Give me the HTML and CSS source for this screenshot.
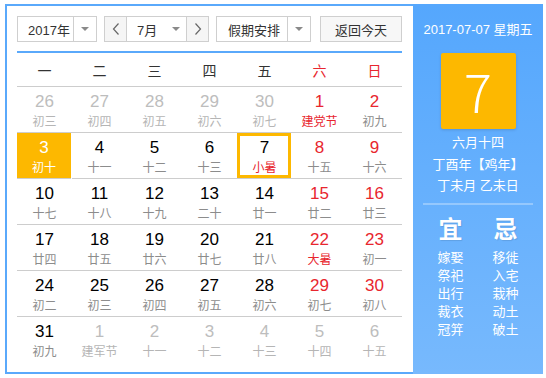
FILE: index.html
```html
<!DOCTYPE html>
<html lang="zh">
<head>
<meta charset="utf-8">
<link rel="stylesheet" href="styles.css">
</head>
<body>
<div class="cal">
  <div class="main">
    <div class="toolbar">
      <div class="sel sel-year"><span class="sel-text">2017年</span><span class="sel-arrow"><i class="tri"></i></span></div>
      <div class="month-group">
        <span class="nav"><svg width="8" height="12" viewBox="0 0 8 12"><polyline points="6.5,0.5 1.5,6 6.5,11.5" fill="none" stroke="#666" stroke-width="1.2"/></svg></span>
        <span class="sel-text month-text">7月</span><span class="sel-arrow month-arrow"><i class="tri"></i></span>
        <span class="nav nav-next"><svg width="8" height="12" viewBox="0 0 8 12"><polyline points="1.5,0.5 6.5,6 1.5,11.5" fill="none" stroke="#666" stroke-width="1.2"/></svg></span>
      </div>
      <div class="sel sel-holiday"><span class="sel-text">假期安排</span><span class="sel-arrow"><i class="tri"></i></span></div>
      <div class="btn-today">返回今天</div>
    </div>
    <div class="grid">
      <div class="wk">一</div><div class="wk">二</div><div class="wk">三</div><div class="wk">四</div><div class="wk">五</div><div class="wk red">六</div><div class="wk red">日</div>

      <div class="day other"><b>26</b><span>初三</span></div>
      <div class="day other"><b>27</b><span>初四</span></div>
      <div class="day other"><b>28</b><span>初五</span></div>
      <div class="day other"><b>29</b><span>初六</span></div>
      <div class="day other"><b>30</b><span>初七</span></div>
      <div class="day we fest"><b>1</b><span>建党节</span></div>
      <div class="day we"><b>2</b><span>初九</span></div>

      <div class="day sel-day"><b>3</b><span>初十</span></div>
      <div class="day"><b>4</b><span>十一</span></div>
      <div class="day"><b>5</b><span>十二</span></div>
      <div class="day"><b>6</b><span>十三</span></div>
      <div class="day today fest"><b>7</b><span>小暑</span></div>
      <div class="day we"><b>8</b><span>十五</span></div>
      <div class="day we"><b>9</b><span>十六</span></div>

      <div class="day"><b>10</b><span>十七</span></div>
      <div class="day"><b>11</b><span>十八</span></div>
      <div class="day"><b>12</b><span>十九</span></div>
      <div class="day"><b>13</b><span>二十</span></div>
      <div class="day"><b>14</b><span>廿一</span></div>
      <div class="day we"><b>15</b><span>廿二</span></div>
      <div class="day we"><b>16</b><span>廿三</span></div>

      <div class="day"><b>17</b><span>廿四</span></div>
      <div class="day"><b>18</b><span>廿五</span></div>
      <div class="day"><b>19</b><span>廿六</span></div>
      <div class="day"><b>20</b><span>廿七</span></div>
      <div class="day"><b>21</b><span>廿八</span></div>
      <div class="day we fest"><b>22</b><span>大暑</span></div>
      <div class="day we"><b>23</b><span>初一</span></div>

      <div class="day"><b>24</b><span>初二</span></div>
      <div class="day"><b>25</b><span>初三</span></div>
      <div class="day"><b>26</b><span>初四</span></div>
      <div class="day"><b>27</b><span>初五</span></div>
      <div class="day"><b>28</b><span>初六</span></div>
      <div class="day we"><b>29</b><span>初七</span></div>
      <div class="day we"><b>30</b><span>初八</span></div>

      <div class="day last"><b>31</b><span>初九</span></div>
      <div class="day last other"><b>1</b><span>建军节</span></div>
      <div class="day last other"><b>2</b><span>十一</span></div>
      <div class="day last other"><b>3</b><span>十二</span></div>
      <div class="day last other"><b>4</b><span>十三</span></div>
      <div class="day last other"><b>5</b><span>十四</span></div>
      <div class="day last other"><b>6</b><span>十五</span></div>
    </div>
  </div>
  <div class="side">
    <div class="side-date">2017-07-07 星期五</div>
    <div class="big-day">7</div>
    <div class="lunar">
      <div>六月十四</div>
      <div>丁酉年【鸡年】</div>
      <div>丁未月 乙未日</div>
    </div>
    <div class="sep"></div>
    <div class="yiji">
      <div class="col">
        <div class="yj-title">宜</div>
        <div>嫁娶</div><div>祭祀</div><div>出行</div><div>裁衣</div><div>冠笄</div>
      </div>
      <div class="col">
        <div class="yj-title">忌</div>
        <div>移徙</div><div>入宅</div><div>栽种</div><div>动土</div><div>破土</div>
      </div>
    </div>
  </div>
</div>
</body>
</html>
```
FILE: styles.css
```css
* { box-sizing: border-box; }
html, body { margin: 0; padding: 0; background: #fff; }
body {
  font-family: "Liberation Sans", "Noto Sans CJK SC", sans-serif;
  color: #333;
}
.cal {
  display: flex;
  width: 538px;
  height: 370px;
  margin: 4px 0 0 5px;
}
.main {
  width: 408px;
  height: 370px;
  border: 2px solid #5aa9fb;
  border-right: none;
  padding: 10px 0 0 10px;
}
.toolbar {
  display: flex;
  height: 26px;
  font-size: 13px;
}
.sel {
  display: flex;
  height: 26px;
  border: 1px solid #cfcfcf;
  background: #fff;
}
.sel-text {
  display: flex;
  align-items: center;
  color: #333;
}
.sel-arrow {
  display: flex;
  align-items: center;
  justify-content: center;
  border-left: 1px solid #cfcfcf;
}
.tri {
  width: 0; height: 0;
  border-left: 4px solid transparent;
  border-right: 4px solid transparent;
  border-top: 4px solid #8a8a8a;
}
.sel-year { width: 80px; }
.sel-year .sel-text { width: 55px; padding-left: 10px; }
.sel-year .sel-arrow { flex: 1; }
.month-group {
  display: flex;
  height: 26px;
  width: 105px;
  margin-left: 7px;
  border: 1px solid #cfcfcf;
}
.nav {
  width: 22px;
  display: flex;
  align-items: center;
  justify-content: center;
  background: #f5f5f5;
  border-right: 1px solid #cfcfcf;
}
.nav-next { border-right: none; border-left: 1px solid #cfcfcf; }
.month-text { width: 38px; padding-left: 10px; }
.month-arrow { border-left: none; width: 21px; }
.sel-holiday { width: 95px; margin-left: 7px; }
.sel-holiday .sel-text { width: 70px; padding-left: 11px; }
.sel-holiday .sel-arrow { flex: 1; }
.btn-today {
  width: 82px;
  height: 26px;
  margin-left: 9px;
  border: 1px solid #cfcfcf;
  background: #f7f7f7;
  display: flex;
  align-items: center;
  justify-content: center;
  color: #333;
}
.grid {
  margin-top: 9px;
  width: 385px;
  border-top: 2px solid #5aa9fb;
  display: grid;
  grid-template-columns: repeat(7, 55px);
  grid-template-rows: 34px repeat(6, 46px);
}
.wk {
  display: flex;
  align-items: center;
  justify-content: center;
  font-size: 14px;
  color: #333;
  border-bottom: 1px solid #cdcdcd;
}
.red { color: #e8262e; }
.day {
  display: flex;
  flex-direction: column;
  align-items: center;
  border-bottom: 1px solid #cdcdcd;
  padding-top: 5px;
  position: relative;
}
.day.last { border-bottom: none; }
.day b {
  font-weight: normal;
  font-size: 17px;
  line-height: 20px;
  color: #000;
}
.day span {
  font-size: 12px;
  line-height: 18px;
  color: #8c8c8c;
  margin-top: 1px;
}
.day.we b { color: #e8262e; }
.day.fest span { color: #e8262e; }
.day.other b { color: #bdbdbd; }
.day.other span { color: #b5b5b5; }
.day.sel-day {
  background: #fdb800;
  margin-right: 1px;
}
.day.sel-day b, .day.sel-day span { color: #fff; }
.day.today::after {
  content: "";
  position: absolute;
  left: 0; top: 0; right: 1px; bottom: 0;
  border: 3px solid #fdb800;
}
.side {
  width: 130px;
  height: 370px;
  background: linear-gradient(#55a7fd, #77b9fd);
  color: #fff;
  display: flex;
  flex-direction: column;
  align-items: center;
}
.side-date {
  margin-top: 16px;
  font-size: 13px;
  line-height: 20px;
}
.big-day {
  margin-top: 13px;
  width: 75px;
  height: 76px;
  background: #fdb800;
  border-radius: 2px;
  box-shadow: 0 1px 3px rgba(0,0,0,0.15);
  display: flex;
  align-items: center;
  justify-content: center;
  font-family: "Noto Sans CJK SC", sans-serif;
  font-weight: 300;
  font-size: 52px;
  line-height: 1;
  color: #fff;
}
.lunar {
  margin-top: 3px;
  font-size: 13px;
  line-height: 21.5px;
  text-align: center;
}
.sep {
  margin-top: 6px;
  width: 110px;
  height: 2px;
  background: rgba(255,255,255,0.3);
}
.yiji {
  display: flex;
  margin-top: 10px;
  width: 110px;
}
.col {
  width: 55px;
  text-align: center;
  font-size: 13px;
  line-height: 18px;
}
.yj-title {
  font-size: 24px;
  font-weight: bold;
  line-height: 30px;
  margin-bottom: 4px;
  text-shadow: 1px 1px 1px rgba(0,0,0,0.1);
}
```
